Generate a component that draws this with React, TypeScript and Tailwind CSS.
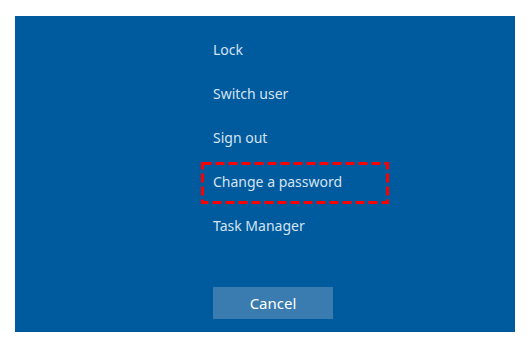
export default function App() {
  const items = ["Lock", "Switch user", "Sign out", "Change a password", "Task Manager"];

  return (
    <div className="w-[532px] h-[349px] bg-white pt-[16px] pl-[15px]" style={{ fontFamily: '"Noto Sans", "Liberation Sans", sans-serif' }}>
      <div className="w-[500px] h-[316px] bg-[#005a9e] pl-[198px] pt-[11px] flex flex-col">
        <ul className="flex flex-col">
          {items.map((label) => (
            <li key={label} className="relative h-[44px] flex items-center text-[14px] text-[#d5e3f0]">
              {label}
              {label === "Change a password" && (
                <svg className="absolute left-[-12px] top-[3px]" width="188" height="42" viewBox="0 0 188 42">
                  <rect x="1.5" y="1.5" width="185" height="39" fill="none" stroke="#ff0000" strokeWidth="3" strokeDasharray="9 4" />
                </svg>
              )}
            </li>
          ))}
        </ul>
        <button className="mt-[40px] w-[120px] h-[32px] bg-[#3a7bb0] text-white text-[15px] flex items-center justify-center">
          Cancel
        </button>
      </div>
    </div>
  );
}
